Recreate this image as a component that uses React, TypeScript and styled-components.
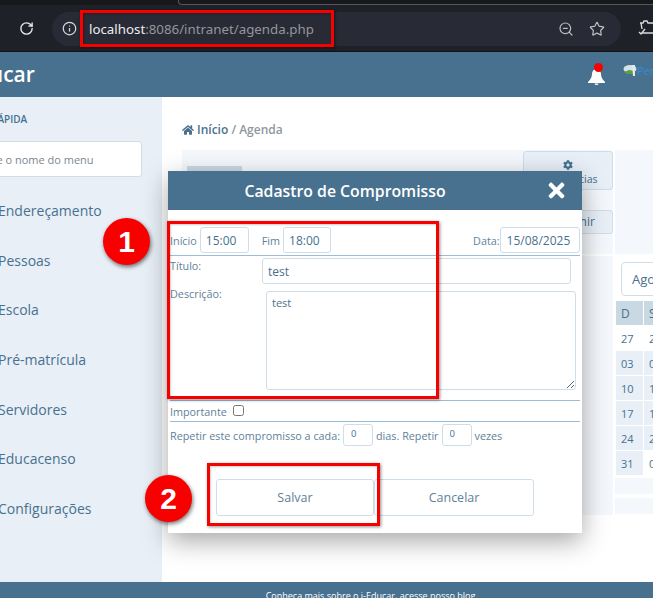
import React from 'react';
import styled, { createGlobalStyle } from 'styled-components';
import { FaCog, FaHome, FaTimes } from 'react-icons/fa';
import { Info, RotateCw, Star, ZoomOut } from 'lucide-react';

const GlobalStyle = createGlobalStyle`
  html, body {
    margin: 0;
    width: 653px;
    height: 598px;
    overflow: hidden;
    background: #fff;
    font-family: "Open Sans", sans-serif;
  }
  * { box-sizing: border-box; }
`;

const Page = styled.div`
  position: relative;
  width: 653px;
  height: 598px;
  overflow: hidden;
  display: flex;
  flex-direction: column;
`;

const Chrome = styled.div`
  height: 52px;
  flex: none;
  background: #1f2128;
  border-bottom: 1px solid #101114;
  display: flex;
  flex-direction: column;
`;

const TabStrip = styled.div`
  height: 5px;
  flex: none;
  background: #17181c;
`;

const TabEdge = styled.div`
  height: 5px;
  margin-left: 178px;
  border-left: 1px solid #55565a;
  border-bottom: 1px solid #55565a;
  border-bottom-left-radius: 4px;
`;

const ChromeBar = styled.div`
  flex: 1;
  display: flex;
  align-items: center;
  overflow: hidden;
`;

const ReloadSlot = styled.div`
  width: 52px;
  flex: none;
  display: flex;
  justify-content: center;
  color: #e6e7e9;
`;

const Omnibox = styled.div`
  width: 569px;
  flex: none;
  height: 34px;
  margin-top: 1px;
  border-radius: 17px;
  background: #282a35;
  display: flex;
  align-items: center;
  padding-left: 10px;
  color: #d8d9dc;
`;

const Url = styled.div`
  margin-left: 12px;
  font-family: "Noto Sans", sans-serif;
  font-size: 13.3px;
  color: #94969c;
  flex: 1;
  b { font-weight: 400; color: #eceded; }
`;

const OmniIcon = styled.span`
  color: #bcbdc1;
  display: flex;
  margin-right: ${(p: { $gap: number }) => p.$gap}px;
`;

const ExtensionIcon = styled.svg`
  flex: none;
  margin-left: 17px;
`;

const Topbar = styled.header`
  height: 45px;
  flex: none;
  background: #48718f;
  display: flex;
  align-items: center;
  position: relative;
`;

const Brand = styled.div`
  margin-left: -35px;
  margin-top: -2px;
  font-size: 21px;
  font-weight: 600;
  color: #fff;
  flex: 1;
`;

const BellWrap = styled.div`
  position: relative;
  display: flex;
  margin-right: 18px;
  margin-top: 5px;
`;

const BellDot = styled.span`
  position: absolute;
  top: -6px;
  left: 6px;
  width: 9px;
  height: 9px;
  border-radius: 50%;
  background: #f80000;
`;

const Profile = styled.div`
  width: 30px;
  margin-top: -8px;
  display: flex;
  align-items: center;
  font-size: 11px;
  color: #2c8fd6;
  overflow: hidden;
  flex: none;
`;

const Body = styled.div`
  flex: 1;
  display: flex;
  min-height: 0;
`;

const Sidebar = styled.aside`
  width: 162px;
  flex: none;
  background: #e8eff7;
  overflow: hidden;
`;

const SideTitle = styled.div`
  margin: 15px 0 0 -44px;
  font-size: 10px;
  font-weight: 600;
  color: #48718f;
  line-height: 14px;
  white-space: nowrap;
`;

const SideSearch = styled.input`
  display: block;
  margin: 15px 0 0 -40px;
  width: 182px;
  height: 36px;
  background: #fff;
  border: 1px solid #cfdde9;
  border-radius: 3px;
  padding: 0 0 0 12px;
  font-family: "Open Sans", sans-serif;
  font-size: 11px;
  &::placeholder { color: #7b8791; opacity: 1; }
`;

const SideMenu = styled.nav`
  margin-top: 24px;
  display: flex;
  flex-direction: column;
`;

const SideItem = styled.a`
  height: 49.7px;
  margin-left: -2px;
  font-size: 14px;
  line-height: 20px;
  color: #48718f;
  white-space: nowrap;
`;

const Content = styled.main`
  flex: 1;
  min-width: 0;
  padding: 25px 0 0 20px;
  overflow: hidden;
`;

const Crumb = styled.div`
  font-size: 12px;
  font-weight: 600;
  line-height: 16px;
  color: #8f979d;
  display: flex;
  align-items: center;
  gap: 3px;
  b { font-weight: 600; color: #48718f; }
  svg { color: #48718f; }
`;

const Panels = styled.div`
  margin-top: 12px;
  display: grid;
  grid-template-columns: 431px 240px;
  grid-template-rows: 104px 259px;
  gap: 2px;
`;

const Panel = styled.section`
  background: #f4f7fb;
  padding-top: 1px;
  display: flex;
  flex-direction: column;
  align-items: flex-end;
  position: relative;
`;

const TabChip = styled.div`
  position: absolute;
  left: 5px;
  top: 16px;
  width: 55px;
  height: 10px;
  background: #c9d9e4;
`;

const ToolButton = styled.button<{ $h: number; $pl?: number; $fs: number }>`
  width: 90px;
  height: ${(p) => p.$h}px;
  margin-bottom: 20px;
  padding: ${(p) => (p.$pl ? 0 : 5)}px 0 0 ${(p) => p.$pl ?? 0}px;
  background: #e8eff7;
  border: 1px solid #cfdde9;
  border-radius: 3px;
  font-family: "Open Sans", sans-serif;
  font-size: ${(p) => p.$fs}px;
  color: #48718f;
  display: flex;
  flex-direction: column;
  align-items: center;
  justify-content: center;
  gap: 2px;
`;

const CalendarPanel = styled.section`
  background: ${(p: { $tinted?: boolean }) => (p.$tinted ? '#f4f7fb' : '#fff')};
  padding-top: 6px;
`;

const MonthSelect = styled.div`
  margin-left: 6px;
  width: 200px;
  height: 34px;
  background: #fff;
  border: 1px solid #cfdde9;
  border-radius: 4px;
  padding-left: 10px;
  font-size: 13px;
  line-height: 32px;
  color: #48718f;
`;

const CalTable = styled.table`
  margin-top: 4px;
  border-collapse: separate;
  border-spacing: 1px;
  table-layout: fixed;
  width: 197px;
  font-size: 11px;
  color: #48718f;
`;

const CalHead = styled.th`
  width: 26px;
  height: 24px;
  background: #c9d9e4;
  font-weight: 400;
  font-size: 12px;
  text-align: left;
  padding: 0 0 0 5px;
`;

const CalCell = styled.td`
  height: 24px;
  padding: 0 0 0 5px;
  background: ${(p: { $shaded: boolean }) => (p.$shaded ? '#e8eff7' : '#fff')};
`;

const CalStrip = styled.div`
  height: 16px;
  margin-top: ${(p: { $mt: number }) => p.$mt}px;
  background: #f4f7fb;
`;

const Footer = styled.footer`
  height: 16px;
  flex: none;
  background: #48718f;
  text-align: center;
  font-size: 9px;
  line-height: 27px;
  color: #fff;
  overflow: hidden;
  white-space: nowrap;
  padding-left: 88px;
`;

const Modal = styled.div`
  position: absolute;
  left: 168px;
  top: 171px;
  width: 414px;
  height: 362px;
  background: #fff;
  box-shadow: 0 8px 24px rgba(0, 0, 0, 0.35);
  display: flex;
  flex-direction: column;
`;

const ModalHeader = styled.div`
  height: 39px;
  flex: none;
  background: #48718f;
  color: #fff;
  display: flex;
  align-items: center;
  justify-content: center;
  position: relative;
  font-size: 15.8px;
  font-weight: 600;
  padding-right: 60px;
`;

const CloseIcon = styled.span`
  position: absolute;
  right: 14px;
  top: 8px;
  display: flex;
`;

const ModalBody = styled.div`
  padding: 17px 2px 0;
  display: flex;
  flex-direction: column;
  font-size: 10.8px;
  color: #5f7f98;
`;

const TimeRow = styled.div`
  height: 29px;
  border-bottom: 1px solid #9dbdd6;
  display: flex;
  align-items: flex-start;
`;

const Field = styled.input<{ $w: number; $ml?: number; $pl?: number }>`
  width: ${(p) => p.$w}px;
  height: 26px;
  margin-left: ${(p) => p.$ml ?? 0}px;
  border: 1px solid #cfdde9;
  border-radius: 3px;
  background: #fff;
  padding: 0 0 0 ${(p) => p.$pl ?? 5}px;
  font-family: "Open Sans", sans-serif;
  font-size: 12px;
  color: #48718f;
  flex: none;
`;

const TimeLabel = styled.label`
  line-height: 28px;
  margin-left: ${(p: { $ml: number }) => p.$ml}px;
  flex: none;
`;

const FormRow = styled.div`
  display: flex;
  align-items: flex-start;
  margin-top: ${(p: { $mt: number }) => p.$mt}px;
`;

const FormLabel = styled.label<{ $w: number; $top: number }>`
  width: ${(p) => p.$w}px;
  margin-top: ${(p) => p.$top}px;
  flex: none;
  line-height: 14px;
`;

const DescriptionBox = styled.textarea`
  width: 310px;
  height: 99px;
  border: 1px solid #cfdde9;
  border-radius: 3px;
  padding: 3px 5px;
  font-family: "Open Sans", sans-serif;
  font-size: 11px;
  color: #48718f;
  flex: none;
  display: block;
`;

const FlagRow = styled.div`
  height: 22px;
  margin-top: 10px;
  border-top: 1px solid #9dbdd6;
  border-bottom: 1px solid #9dbdd6;
  display: flex;
  align-items: center;
  gap: 6px;
`;

const FlagBox = styled.input`
  margin: -1px 0 0;
  width: 11px;
  height: 11px;
`;

const RepeatRow = styled.div`
  margin-top: 2px;
  display: flex;
  align-items: center;
  gap: 3px;
`;

const SmallField = styled.input`
  width: 30px;
  height: 22px;
  border: 1px solid #cfdde9;
  border-radius: 3px;
  padding: 0 0 4px 7px;
  font-family: "Open Sans", sans-serif;
  font-size: 9.5px;
  color: #48718f;
`;

const Actions = styled.div`
  margin: 33px 0 0 46px;
  display: flex;
`;

const ActionButton = styled.button`
  width: 158px;
  height: 37px;
  background: #fff;
  border: 1px solid #cfdde9;
  border-radius: 3px;
  font-family: "Open Sans", sans-serif;
  font-size: 12.5px;
  color: #5f7f98;
  & + & { width: 160px; }
`;

const Highlight = styled.div<{ $x: number; $y: number; $w: number; $h: number }>`
  position: absolute;
  left: ${(p) => p.$x}px;
  top: ${(p) => p.$y}px;
  width: ${(p) => p.$w}px;
  height: ${(p) => p.$h}px;
  border: 3px solid #f80000;
  box-shadow: 1px 1px 3px rgba(0, 0, 0, 0.45), inset 1px 1px 2px rgba(0, 0, 0, 0.2);
  pointer-events: none;
`;

const StepBadge = styled.div<{ $x: number; $y: number }>`
  position: absolute;
  left: ${(p) => p.$x}px;
  top: ${(p) => p.$y}px;
  width: 47px;
  height: 47px;
  border-radius: 50%;
  background: #f80000;
  box-shadow: 1px 2px 4px rgba(0, 0, 0, 0.55);
  color: #fff;
  font-family: "Liberation Sans", sans-serif;
  font-size: 30px;
  font-weight: 700;
  line-height: 47px;
  text-align: center;
`;

const weekDays = ['D', 'S', 'T', 'Q', 'Q', 'S', 'S'];

// August 2025, days outside the month stay white
const calendarRows = [
  [['27', 0], ['28', 0], ['29', 0], ['30', 0], ['31', 0], ['01', 1], ['02', 1]],
  [['03', 1], ['04', 1], ['05', 1], ['06', 1], ['07', 1], ['08', 1], ['09', 1]],
  [['10', 1], ['11', 1], ['12', 1], ['13', 1], ['14', 1], ['15', 1], ['16', 1]],
  [['17', 1], ['18', 1], ['19', 1], ['20', 1], ['21', 1], ['22', 1], ['23', 1]],
  [['24', 1], ['25', 1], ['26', 1], ['27', 1], ['28', 1], ['29', 1], ['30', 1]],
  [['31', 1], ['01', 0], ['02', 0], ['03', 0], ['04', 0], ['05', 0], ['06', 0]],
] as [string, number][][];

const menuItems = ['Endereçamento', 'Pessoas', 'Escola', 'Pré-matrícula', 'Servidores', 'Educacenso', 'Configurações'];

const App = () => (
  <Page>
    <GlobalStyle />
    <Chrome>
      <TabStrip>
        <TabEdge />
      </TabStrip>
      <ChromeBar>
        <ReloadSlot>
          <RotateCw size={15} strokeWidth={2.2} />
        </ReloadSlot>
        <Omnibox>
          <Info size={15} strokeWidth={2} />
          <Url>
            <b>localhost</b>:8086/intranet/agenda.php
          </Url>
          <OmniIcon $gap={15}>
            <ZoomOut size={16} strokeWidth={1.8} />
          </OmniIcon>
          <OmniIcon $gap={16}>
            <Star size={16} strokeWidth={1.8} />
          </OmniIcon>
        </Omnibox>
        <ExtensionIcon width="16" height="16" viewBox="0 0 16 16" fill="none" stroke="#d8d9dc" strokeWidth="1.4">
          <path d="M2 3h3l1-2h3l1 2h6M3 3l1 6M4 13h12M1 12l2 2 4-5" />
        </ExtensionIcon>
      </ChromeBar>
    </Chrome>

    <Topbar>
      <Brand>Educar</Brand>
      <BellWrap>
        <svg width="17" height="16" viewBox="0 0 17 16" fill="#fff">
          <path d="M8.5 0C5.5 0 4.2 2.5 4 5c-.2 3-1.2 5.5-4 8v1h17v-1c-2.800-2.500-3.800-5-4-8-.2-2.500-1.500-5-4.500-5z" />
          <path d="M6.500 14.500h4a2 1.500 0 0 1-4 0z" />
        </svg>
        <BellDot />
      </BellWrap>
      <Profile>
        <svg width="14" height="13" viewBox="0 0 14 13" style={{ flex: 'none' }}>
          <ellipse cx="7" cy="5" rx="6.5" ry="4" fill="#d5e2ea" />
          <path d="M1 8l5-2 6 1-2 3H4z" fill="#5d9e3f" />
          <path d="M9 1h3v11h-2z" fill="#e7e7e7" />
        </svg>
        Perfil
      </Profile>
    </Topbar>

    <Body>
      <Sidebar>
        <SideTitle>BUSCA RÁPIDA</SideTitle>
        <SideSearch placeholder="Digite o nome do menu" />
        <SideMenu>
          {menuItems.map((item) => (
            <SideItem key={item}>{item}</SideItem>
          ))}
        </SideMenu>
      </Sidebar>

      <Content>
        <Crumb>
          <FaHome size={12} />
          <span>
            <b>Início</b> / Agenda
          </span>
        </Crumb>
        <Panels>
          <Panel>
            <TabChip />
            <ToolButton $h={40} $fs={10.5}>
              <FaCog size={10} />
              Ocorrências
            </ToolButton>
            <ToolButton $h={25} $pl={5} $fs={12}>Imprimir</ToolButton>
          </Panel>
          <CalendarPanel $tinted />
          <Panel />
          <CalendarPanel>
            <MonthSelect>Agosto</MonthSelect>
            <CalTable>
              <thead>
                <tr>
                  {weekDays.map((day, i) => (
                    <CalHead key={i}>{day}</CalHead>
                  ))}
                </tr>
              </thead>
              <tbody>
                {calendarRows.map((row) => (
                  <tr key={row[0][0]}>
                    {row.map(([value, inMonth]) => (
                      <CalCell key={value} $shaded={inMonth === 1}>
                        {value}
                      </CalCell>
                    ))}
                  </tr>
                ))}
              </tbody>
            </CalTable>
            <CalStrip $mt={2} />
            <CalStrip $mt={4} />
          </CalendarPanel>
        </Panels>
      </Content>
    </Body>

    <Footer>Conheça mais sobre o i-Educar, acesse nosso blog</Footer>

    <Modal>
      <ModalHeader>
        Cadastro de Compromisso
        <CloseIcon>
          <FaTimes size={23} />
        </CloseIcon>
      </ModalHeader>
      <ModalBody>
        <TimeRow>
          <TimeLabel $ml={0}>Início</TimeLabel>
          <Field $w={49} $ml={3} defaultValue="15:00" />
          <TimeLabel $ml={13}>Fim</TimeLabel>
          <Field $w={48} $ml={3} defaultValue="18:00" />
          <TimeLabel $ml={142}>Data:</TimeLabel>
          <Field $w={80} $pl={6} defaultValue="15/08/2025" />
        </TimeRow>
        <FormRow $mt={2}>
          <FormLabel $w={92} $top={1}>Título:</FormLabel>
          <Field $w={309} defaultValue="test" />
        </FormRow>
        <FormRow $mt={7}>
          <FormLabel $w={96} $top={-4}>Descrição:</FormLabel>
          <DescriptionBox defaultValue="test" />
        </FormRow>
        <FlagRow>
          Importante
          <FlagBox type="checkbox" />
        </FlagRow>
        <RepeatRow>
          Repetir este compromisso a cada:
          <SmallField defaultValue="0" />
          dias. Repetir
          <SmallField defaultValue="0" />
          vezes
        </RepeatRow>
        <Actions>
          <ActionButton>Salvar</ActionButton>
          <ActionButton>Cancelar</ActionButton>
        </Actions>
      </ModalBody>
    </Modal>

    <Highlight $x={80} $y={10} $w={254} $h={37} />
    <Highlight $x={167} $y={221} $w={272} $h={178} />
    <Highlight $x={207} $y={463} $w={173} $h={63} />
    <StepBadge $x={103} $y={218}>1</StepBadge>
    <StepBadge $x={145} $y={475}>2</StepBadge>
  </Page>
);

export default App;
